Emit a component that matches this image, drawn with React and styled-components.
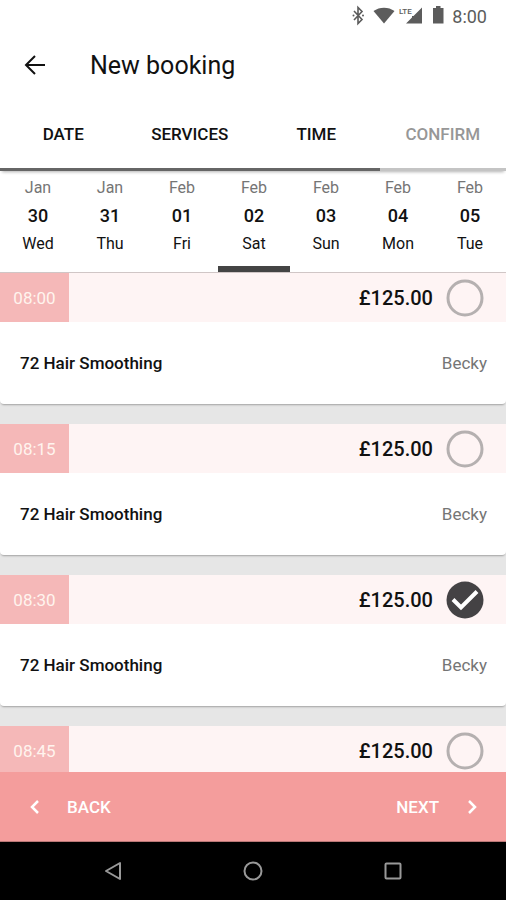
import { useState } from "react";
import styled, { createGlobalStyle, css } from "styled-components";

const GlobalStyle = createGlobalStyle`
  * {
    box-sizing: border-box;
  }
  body {
    margin: 0;
    background: #e6e6e6;
    font-family: Roboto, "Liberation Sans", sans-serif;
    color: #111;
  }
  button {
    border: none;
    padding: 0;
    background: none;
    font-family: inherit;
    color: inherit;
    cursor: pointer;
  }
`;

const Screen = styled.div`
  display: flex;
  flex-direction: column;
  height: 100vh;
  overflow: hidden;
`;

const StatusBar = styled.div`
  display: flex;
  align-items: center;
  justify-content: flex-end;
  height: 32px;
  padding-right: 19px;
  background: #fff;
  color: #5c5c5c;
`;

const StatusIcons = styled.svg`
  width: 96px;
  height: 24px;
  margin-right: 5px;
`;

const Clock = styled.span`
  font-size: 18px;
`;

const Header = styled.header`
  display: flex;
  align-items: center;
  height: 66px;
  padding: 0 22px;
  background: #fff;
`;

const BackArrow = styled.button`
  display: flex;
  margin-right: 42px;
`;

const Title = styled.h1`
  margin: 0;
  font-size: 25px;
  font-weight: 400;
`;

const Tabs = styled.nav`
  position: relative;
  z-index: 1;
  display: flex;
  height: 73px;
  flex-shrink: 0;
  background: #fff;
  box-shadow: 0 3px 3px -2px rgba(0, 0, 0, 0.3);
`;

const Tab = styled.button`
  flex: 1;
  padding-top: 2px;
  font-size: 17px;
  font-weight: 500;
  border-bottom: 3px solid #666;
  ${(props) =>
    props.$pending &&
    css`
      color: #979797;
      border-bottom-color: #c4c4c4;
    `}
`;

const DateStrip = styled.div`
  display: flex;
  flex-shrink: 0;
  height: 102px;
  padding-left: 2px;
  background: #fff;
  border-bottom: 1px solid #d0c6c6;
`;

const Day = styled.button`
  flex: 1;
  display: flex;
  flex-direction: column;
  align-items: center;
  padding-top: 3px;
  font-size: 16px;
  line-height: 28px;
  ${(props) =>
    props.$active &&
    css`
      box-shadow: inset 0 -6px #444;
    `}
`;

const Month = styled.span`
  color: #757575;
`;

const DayNumber = styled.span`
  font-size: 18px;
  font-weight: 500;
`;

const SlotList = styled.main`
  flex: 1;
  min-height: 0;
  display: flex;
  flex-direction: column;
  gap: 20px;
  overflow-y: auto;
  scrollbar-width: none;
`;

const Slot = styled.section`
  flex-shrink: 0;
  background: #fff;
  border-radius: 0 0 4px 4px;
  box-shadow: 0 2px 2px -1px rgba(0, 0, 0, 0.3);
`;

const SlotHeader = styled.label`
  display: flex;
  align-items: center;
  height: 49px;
  padding-right: 22px;
  background: #fef4f4;
  cursor: pointer;
`;

const Time = styled.span`
  display: flex;
  align-items: center;
  justify-content: center;
  width: 69px;
  height: 100%;
  margin-right: auto;
  background: #f5b8b8;
  color: #fff4ee;
  font-size: 17px;
`;

const Price = styled.span`
  margin-right: 13px;
  font-size: 20px;
  font-weight: 500;
`;

const RadioMark = styled.span`
  position: relative;
  display: flex;
`;

const Radio = styled.input`
  position: absolute;
  inset: 0;
  width: 100%;
  height: 100%;
  margin: 0;
  opacity: 0;
  cursor: pointer;
`;

const SlotBody = styled.div`
  display: flex;
  align-items: center;
  justify-content: space-between;
  height: 82px;
  padding: 0 19px 0 20px;
  font-size: 17px;
`;

const Service = styled.span`
  font-weight: 500;
`;

const Staff = styled.span`
  color: #757575;
`;

const Footer = styled.footer`
  display: flex;
  align-items: center;
  justify-content: space-between;
  flex-shrink: 0;
  height: 70px;
  padding: 0 22px;
  background: #f49d9c;
  border-bottom: 1px solid #b97877;
`;

const StepButton = styled.button`
  display: flex;
  align-items: center;
  gap: 21px;
  color: #fff;
  font-size: 17px;
  font-weight: 500;
`;

const SystemNav = styled.div`
  display: flex;
  align-items: center;
  justify-content: space-around;
  flex-shrink: 0;
  height: 58px;
  padding: 0 43px;
  background: #000;
`;

const SystemButton = styled.button`
  display: flex;
`;

const tabs = ["DATE", "SERVICES", "TIME", "CONFIRM"];

const days = [
  { month: "Jan", number: "30", name: "Wed" },
  { month: "Jan", number: "31", name: "Thu" },
  { month: "Feb", number: "01", name: "Fri" },
  { month: "Feb", number: "02", name: "Sat" },
  { month: "Feb", number: "03", name: "Sun" },
  { month: "Feb", number: "04", name: "Mon" },
  { month: "Feb", number: "05", name: "Tue" },
];

const slots = [
  { time: "08:00", price: "£125.00", service: "72 Hair Smoothing", staff: "Becky" },
  { time: "08:15", price: "£125.00", service: "72 Hair Smoothing", staff: "Becky" },
  { time: "08:30", price: "£125.00", service: "72 Hair Smoothing", staff: "Becky" },
  { time: "08:45", price: "£125.00" },
];

function PhoneStatus() {
  return (
    <StatusBar>
      <StatusIcons viewBox="0 0 96 24" fill="currentColor" aria-hidden="true">
        <path
          d="M3 7l8 8.5-4 4V3.5l4 4L3 16"
          fill="none"
          stroke="currentColor"
          strokeWidth="1.6"
        />
        <circle cx="2.5" cy="11.5" r="1" />
        <circle cx="12" cy="11.5" r="1" />
        <path d="M22.5 7c6-4.5 15-4.5 21 0L33 19.5z" />
        <path d="M71 3.5v16H55l6-6v-1.500h1.500z" />
        <text x="48" y="10" fontSize="8" fontWeight="500">
          LTE
        </text>
        <path d="M82 4h3V2h4.500v2h3v15.500H82z" />
      </StatusIcons>
      <Clock>8:00</Clock>
    </StatusBar>
  );
}

function Chevron({ d }) {
  return (
    <svg width="24" height="24" viewBox="0 0 24 24" fill="none" stroke="#fff" strokeWidth="2.5">
      <path d={d} />
    </svg>
  );
}

function TimeSlot({ time, price, service, staff, checked, onSelect }) {
  return (
    <Slot>
      <SlotHeader>
        <Time>{time}</Time>
        <Price>{price}</Price>
        <RadioMark>
          <Radio type="radio" name="slot" value={time} checked={checked} onChange={onSelect} />
          <svg width="38" height="38" viewBox="0 0 38 38" fill="none">
            {checked ? (
              <>
                <circle cx="19" cy="19" r="18.5" fill="#444244" />
                <path d="M7 18.5l8 8L31 10.5" stroke="#fff" strokeWidth="4" />
              </>
            ) : (
              <circle cx="19" cy="19" r="17" stroke="#b5b0b0" strokeWidth="3" />
            )}
          </svg>
        </RadioMark>
      </SlotHeader>
      {service && (
        <SlotBody>
          <Service>{service}</Service>
          <Staff>{staff}</Staff>
        </SlotBody>
      )}
    </Slot>
  );
}

export default function App() {
  const [day, setDay] = useState("02");
  const [selected, setSelected] = useState("08:30");

  return (
    <Screen>
      <GlobalStyle />
      <PhoneStatus />
      <Header>
        <BackArrow aria-label="Back">
          <svg width="26" height="26" viewBox="0 0 26 26" fill="none" stroke="#111" strokeWidth="2">
            <path d="M23 13H5M13 4l-9 9 9 9" />
          </svg>
        </BackArrow>
        <Title>New booking</Title>
      </Header>
      <Tabs>
        {tabs.map((tab) => (
          <Tab key={tab} $pending={tab === "CONFIRM"}>
            {tab}
          </Tab>
        ))}
      </Tabs>
      <DateStrip>
        {days.map(({ month, number, name }) => (
          <Day key={number} $active={number === day} onClick={() => setDay(number)}>
            <Month>{month}</Month>
            <DayNumber>{number}</DayNumber>
            <span>{name}</span>
          </Day>
        ))}
      </DateStrip>
      <SlotList>
        {slots.map((slot) => (
          <TimeSlot
            key={slot.time}
            {...slot}
            checked={slot.time === selected}
            onSelect={() => setSelected(slot.time)}
          />
        ))}
      </SlotList>
      <Footer>
        <StepButton>
          <Chevron d="M16 6l-6 6 6 6" />
          BACK
        </StepButton>
        <StepButton>
          NEXT
          <Chevron d="M9 6l6 6-6 6" />
        </StepButton>
      </Footer>
      <SystemNav>
        <SystemButton aria-label="System back">
          <svg width="20" height="20" viewBox="0 0 20 20" fill="none" stroke="#999" strokeWidth="2">
            <path d="M17 2v16L3 10z" strokeLinejoin="round" />
          </svg>
        </SystemButton>
        <SystemButton aria-label="Home">
          <svg width="20" height="20" viewBox="0 0 20 20" fill="none" stroke="#999" strokeWidth="2">
            <circle cx="10" cy="10" r="8.5" />
          </svg>
        </SystemButton>
        <SystemButton aria-label="Recent apps">
          <svg width="20" height="20" viewBox="0 0 20 20" fill="none" stroke="#999" strokeWidth="2">
            <rect x="2.5" y="2.5" width="15" height="15" rx="1" />
          </svg>
        </SystemButton>
      </SystemNav>
    </Screen>
  );
}
